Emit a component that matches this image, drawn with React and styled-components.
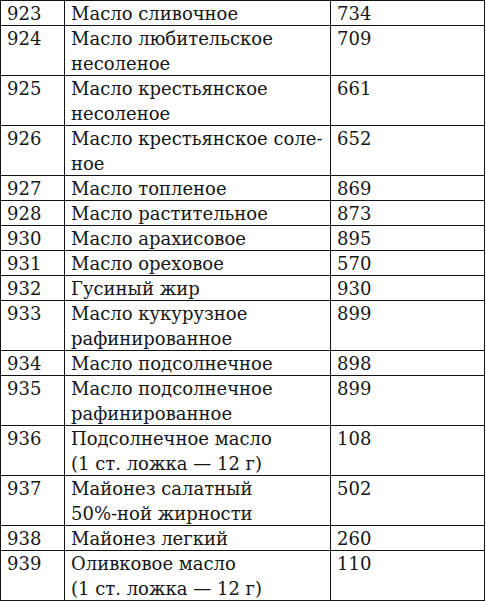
import React from "react";
import styled, { createGlobalStyle } from "styled-components";

const GlobalStyle = createGlobalStyle`
  html, body {
    margin: 0;
    padding: 0;
    background: #fff;
  }
`;

const rows = [
  { code: "923", name: ["Масло сливочное"], kcal: "734" },
  { code: "924", name: ["Масло любительское", "несоленое"], kcal: "709" },
  { code: "925", name: ["Масло крестьянское", "несоленое"], kcal: "661" },
  { code: "926", name: ["Масло крестьянское соле-", "ное"], kcal: "652" },
  { code: "927", name: ["Масло топленое"], kcal: "869" },
  { code: "928", name: ["Масло растительное"], kcal: "873" },
  { code: "930", name: ["Масло арахисовое"], kcal: "895" },
  { code: "931", name: ["Масло ореховое"], kcal: "570" },
  { code: "932", name: ["Гусиный жир"], kcal: "930" },
  { code: "933", name: ["Масло кукурузное", "рафинированное"], kcal: "899" },
  { code: "934", name: ["Масло подсолнечное"], kcal: "898" },
  { code: "935", name: ["Масло подсолнечное", "рафинированное"], kcal: "899" },
  { code: "936", name: ["Подсолнечное масло", "(1 ст. ложка — 12 г)"], kcal: "108" },
  { code: "937", name: ["Майонез салатный", "50%-ной жирности"], kcal: "502" },
  { code: "938", name: ["Майонез легкий"], kcal: "260" },
  { code: "939", name: ["Оливковое масло", "(1 ст. ложка — 12 г)"], kcal: "110" },
];

export default function App() {
  return (
    <>
      <GlobalStyle />
      <Table>
        {rows.map((row) => (
          <Row key={row.code} $lines={row.name.length}>
            <Cell>{row.code}</Cell>
            <Cell>
              {row.name.map((line, i) => (
                <Line key={i}>{line}</Line>
              ))}
            </Cell>
            <Cell>{row.kcal}</Cell>
          </Row>
        ))}
      </Table>
    </>
  );
}

const Table = styled.div`
  display: grid;
  width: 485px;
  box-sizing: border-box;
  border-top: 1px solid #141414;
  border-left: 1px solid #141414;
  font-family: "DejaVu Serif", "Liberation Serif", serif;
  font-size: 18px;
  color: #161616;
`;

const Row = styled.div`
  display: grid;
  grid-template-columns: 64px 266px 154px;
  height: ${(p) => p.$lines * 25}px;
`;

const Cell = styled.div`
  box-sizing: border-box;
  border-right: 1px solid #141414;
  border-bottom: 1px solid #141414;
  padding: 0 0 0 6px;
  line-height: 25px;
  white-space: nowrap;
  overflow: hidden;
`;

const Line = styled.div`
  height: 25px;
`;
